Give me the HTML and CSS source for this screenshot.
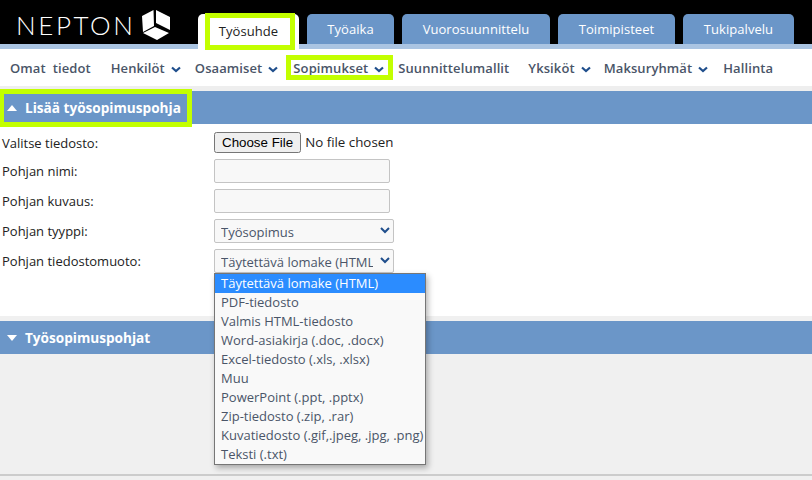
FILE: index.html
```html
<!DOCTYPE html>
<html lang="fi">
<head>
<meta charset="utf-8">
<title>Nepton</title>
<link rel="stylesheet" href="styles.css">
</head>
<body>
<header class="top">
  <div class="logo">
    <span class="logo-text">NEPTON</span>
    <svg class="logo-mark" width="28" height="30" viewBox="0 0 28 30"><path fill="#fff" d="M0 6 11.500 0 12 16 1 22zM14 0 28 7V20L14 13zM1 23 13 17 27 23 15 30z"/></svg>
  </div>
  <nav class="tabs">
    <a class="tab tab-active"><span class="mark tab-mark">Työsuhde</span></a>
    <a class="tab w-aika">Työaika</a>
    <a class="tab w-vuoro">Vuorosuunnittelu</a>
    <a class="tab w-toimi">Toimipisteet</a>
    <a class="tab w-tuki">Tukipalvelu</a>
  </nav>
</header>
<nav class="menu">
  <a class="m1">Omat&nbsp; tiedot</a>
  <a class="m2">Henkilöt <svg class="chev" viewBox="0 0 10 7"><path d="M1 1.500 5 5l4-3.500"/></svg></a>
  <a class="m3">Osaamiset <svg class="chev" viewBox="0 0 10 7"><path d="M1 1.500 5 5l4-3.500"/></svg></a>
  <a class="m4 mark">Sopimukset <svg class="chev" viewBox="0 0 10 7"><path d="M1 1.500 5 5l4-3.500"/></svg></a>
  <a class="m5">Suunnittelumallit</a>
  <a class="m6">Yksiköt <svg class="chev" viewBox="0 0 10 7"><path d="M1 1.500 5 5l4-3.500"/></svg></a>
  <a class="m7">Maksuryhmät <svg class="chev" viewBox="0 0 10 7"><path d="M1 1.500 5 5l4-3.500"/></svg></a>
  <a class="m8">Hallinta</a>
</nav>
<section class="panel">
  <h2 class="bar"><span class="mark bar-mark"><svg class="tri" viewBox="0 0 10 6"><path d="M5 0l5 6H0z"/></svg>Lisää työsopimuspohja</span></h2>
  <form class="form">
    <label class="row row-file"><span class="lbl lbl-file">Valitse tiedosto:</span><input class="file" type="file"></label>
    <label class="row"><span class="lbl">Pohjan nimi:</span><input class="txt" type="text"></label>
    <label class="row"><span class="lbl">Pohjan kuvaus:</span><input class="txt" type="text"></label>
    <label class="row"><span class="lbl">Pohjan tyyppi:</span><span class="sel-wrap"><select class="sel"><option>Työsopimus</option></select><svg class="sel-arrow" viewBox="0 0 10 7"><path d="M1 1 5 5l4-4"/></svg></span></label>
    <label class="row"><span class="lbl">Pohjan tiedostomuoto:</span><span class="sel-wrap"><select class="sel"><option>Täytettävä lomake (HTML)</option></select><svg class="sel-arrow" viewBox="0 0 10 7"><path d="M1 1 5 5l4-4"/></svg></span></label>
  </form>
</section>
<section class="panel2">
  <h2 class="bar bar2"><svg class="tri" viewBox="0 0 10 6"><path d="M0 0h10L5 6z"/></svg>Työsopimuspohjat</h2>
  <div class="empty"></div>
</section>
<ul class="drop">
  <li class="sel-opt">Täytettävä lomake (HTML)</li>
  <li>PDF-tiedosto</li>
  <li>Valmis HTML-tiedosto</li>
  <li>Word-asiakirja (.doc, .docx)</li>
  <li>Excel-tiedosto (.xls, .xlsx)</li>
  <li>Muu</li>
  <li>PowerPoint (.ppt, .pptx)</li>
  <li>Zip-tiedosto (.zip, .rar)</li>
  <li>Kuvatiedosto (.gif,.jpeg, .jpg, .png)</li>
  <li>Teksti (.txt)</li>
</ul>
</body>
</html>
```
FILE: styles.css
```css
* { box-sizing: border-box; }
html, body { margin: 0; height: 480px; overflow: hidden; }
body { position: relative; background: #f0f0f0; font-family: "Open Sans", sans-serif; font-size: 13px; color: #222; }
.top { display: flex; height: 49px; background: #000; border-bottom: 5px solid #aac4e2; }
.logo { width: 198px; display: flex; align-items: flex-start; padding: 10px 0 0 16px; gap: 6px; }
.logo-text { font-family: Lato, sans-serif; font-weight: 300; font-size: 26px; line-height: 30px; letter-spacing: 2.6px; color: #fff; }
.logo-mark { flex: none; }
.tabs { display: flex; gap: 8px; padding-top: 14px; height: 49px; }
.tab { display: flex; align-items: center; justify-content: center; height: 30px; background: #6b96c8; color: #fff; border-radius: 5px 5px 0 0; font-size: 13px; letter-spacing: .05px; }
.tab-active { width: 101px; height: 35px; background: #fff; color: #222; padding: 0 0 5px; }
.w-aika { width: 87px; }
.w-vuoro { width: 148px; }
.w-toimi { width: 117px; }
.w-tuki { width: 111px; }
.mark { outline: 5px solid #c3ff00; outline-offset: 0; }
.tab-mark { display: flex; align-items: center; justify-content: center; width: 80px; height: 27px; margin: 4px 0 0 3px; padding-right: 3px; }
.menu { display: flex; align-items: center; height: 37px; background: #fff; font-weight: 600; color: #4a5568; white-space: nowrap; }
.menu a { display: flex; align-items: center; gap: 6px; letter-spacing: .1px; }
.m1 { margin-left: 10px; }
.m2 { margin-left: 20px; }
.m3 { margin-left: 14px; }
.m4 { margin-left: 13px; padding: 0 4px 0 2px; height: 15px; margin-right: 10px; }
.m5 { margin-left: 0; }
.m6 { margin-left: 19px; }
.m7 { margin-left: 13px; }
.m8 { margin-left: 15px; }
.chev { width: 10px; height: 7px; margin-top: 3px; }
.chev path { fill: none; stroke: #1f4e8c; stroke-width: 2.2; }
.panel { padding-top: 5px; background: linear-gradient(#eee 5px, #fff 5px); height: 230px; }
.bar { display: flex; align-items: center; height: 33px; margin: 0; background: #6b96c8; color: #fff; font-size: 13.600px; font-weight: 700; }
.bar-mark { display: flex; align-items: center; height: 28px; width: 183px; margin-left: 4px; padding-left: 3px; }
.tri { width: 10px; height: 6px; margin-right: 8px; fill: #fff; flex: none; }
.bar2 { padding-left: 7px; }
.form { display: flex; flex-direction: column; padding-top: 7px; }
.row { display: flex; align-items: center; height: 30px; padding-left: 2px; }
.row-file { height: 22px; margin-bottom: 3px; }
.lbl { width: 212px; flex: none; }
.lbl-file { padding-top: 2px; }
.file { font: 13.33px "Open Sans", sans-serif; width: 190px; color: #222; }
.txt { width: 176px; height: 24px; background: #f8f8f8; border: 1px solid #c4c4c4; border-radius: 2px; padding: 0 6px; }
.sel-wrap { position: relative; display: block; width: 180px; height: 24px; }
.sel { appearance: none; display: block; width: 180px; height: 24px; background: #f8f8f8; border: 1px solid #c4c4c4; border-radius: 2px; font: 13px "Open Sans", sans-serif; color: #4a5568; padding: 1px 20px 0 6px; }
.sel-arrow { position: absolute; left: 166px; top: 8px; width: 10px; height: 7px; pointer-events: none; }
.sel-arrow path { fill: none; stroke: #1f4e8c; stroke-width: 2; }
.panel2 { padding-top: 5px; height: 160px; border-bottom: 2px solid #ccc; background: #f0f0f0; }
.empty { height: 120px; }
.drop { position: absolute; left: 214px; top: 273px; width: 212px; height: 192px; margin: 0; padding: 0; list-style: none; background: #f9f9f9; border: 1px solid #767676; box-shadow: 2px 3px 6px rgba(0,0,0,.3); color: #4a5568; white-space: nowrap; }
.drop li { height: 19px; line-height: 19px; padding-left: 6px; }
.drop .sel-opt { background: #2b8cff; color: #fff; }
```
